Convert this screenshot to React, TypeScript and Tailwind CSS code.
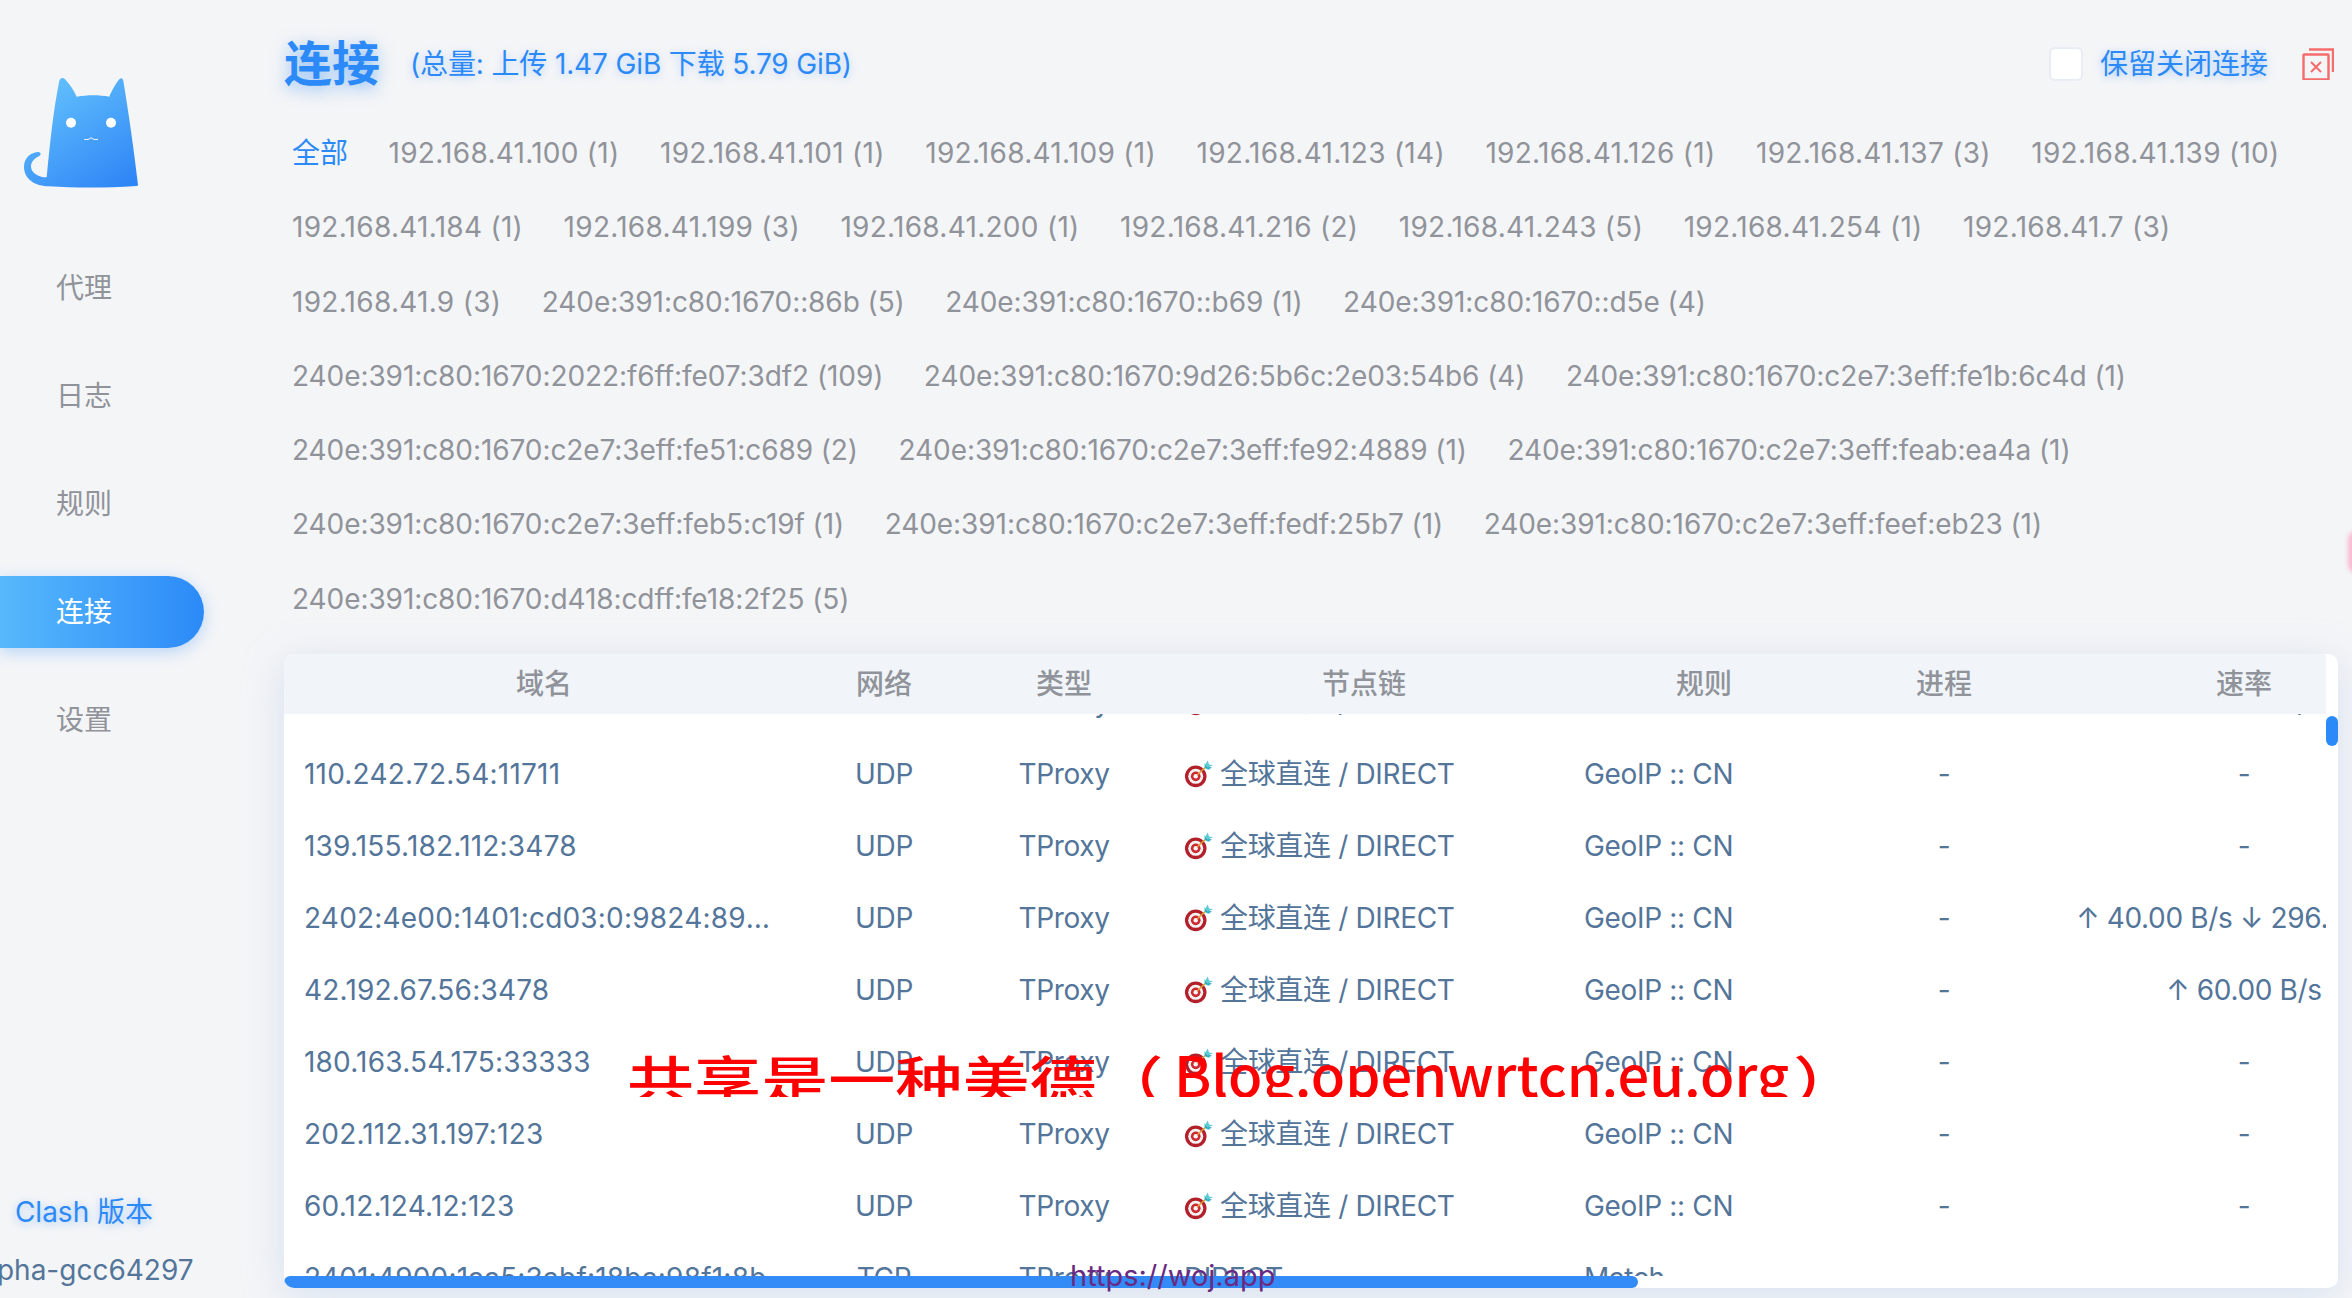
import React from 'react'

const ips = [
  '192.168.41.100 (1)', '192.168.41.101 (1)', '192.168.41.109 (1)', '192.168.41.123 (14)',
  '192.168.41.126 (1)', '192.168.41.137 (3)', '192.168.41.139 (10)', '192.168.41.184 (1)',
  '192.168.41.199 (3)', '192.168.41.200 (1)', '192.168.41.216 (2)', '192.168.41.243 (5)',
  '192.168.41.254 (1)', '192.168.41.7 (3)', '192.168.41.9 (3)', '240e:391:c80:1670::86b (5)',
  '240e:391:c80:1670::b69 (1)', '240e:391:c80:1670::d5e (4)',
  '240e:391:c80:1670:2022:f6ff:fe07:3df2 (109)', '240e:391:c80:1670:9d26:5b6c:2e03:54b6 (4)',
  '240e:391:c80:1670:c2e7:3eff:fe1b:6c4d (1)', '240e:391:c80:1670:c2e7:3eff:fe51:c689 (2)',
  '240e:391:c80:1670:c2e7:3eff:fe92:4889 (1)', '240e:391:c80:1670:c2e7:3eff:feab:ea4a (1)',
  '240e:391:c80:1670:c2e7:3eff:feb5:c19f (1)', '240e:391:c80:1670:c2e7:3eff:fedf:25b7 (1)',
  '240e:391:c80:1670:c2e7:3eff:feef:eb23 (1)', '240e:391:c80:1670:d418:cdff:fe18:2f25 (5)',
]

const rows = [
  { host: '120.232.65.11:443', net: 'UDP', chain: '全球直连 / DIRECT', rule: 'GeoIP :: CN', speed: '↑ 60.00 B/s' },
  { host: '110.242.72.54:11711', net: 'UDP', chain: '全球直连 / DIRECT', rule: 'GeoIP :: CN', speed: '-' },
  { host: '139.155.182.112:3478', net: 'UDP', chain: '全球直连 / DIRECT', rule: 'GeoIP :: CN', speed: '-' },
  { host: '2402:4e00:1401:cd03:0:9824:892...', net: 'UDP', chain: '全球直连 / DIRECT', rule: 'GeoIP :: CN', speed: '↑ 40.00 B/s ↓ 296.00 B/s' },
  { host: '42.192.67.56:3478', net: 'UDP', chain: '全球直连 / DIRECT', rule: 'GeoIP :: CN', speed: '↑ 60.00 B/s' },
  { host: '180.163.54.175:33333', net: 'UDP', chain: '全球直连 / DIRECT', rule: 'GeoIP :: CN', speed: '-' },
  { host: '202.112.31.197:123', net: 'UDP', chain: '全球直连 / DIRECT', rule: 'GeoIP :: CN', speed: '-' },
  { host: '60.12.124.12:123', net: 'UDP', chain: '全球直连 / DIRECT', rule: 'GeoIP :: CN', speed: '-' },
  { host: '2401:4900:1aa5:3abf:18ba:98f1:8b', net: 'TCP', chain: 'DIRECT', rule: 'Match', speed: '-' },
]

function CatLogo() {
  return (
    <svg viewBox="0 0 540 480" className="w-[180px] h-[160px]">
      <defs>
        <linearGradient id="cat" x1="0.25" y1="0.1" x2="0.85" y2="1">
          <stop offset="0" stopColor="#5fbcfc" />
          <stop offset="1" stopColor="#2f86f6" />
        </linearGradient>
      </defs>
      <path
        d="M178 92C182 82 190 82 197 90C210 104 222 122 230 140C262 134 298 134 328 140C336 120 348 100 358 88C364 82 368 84 370 92C386 190 402 300 414 404C414 406 412 408 408 408C320 414 230 414 145 409C100 407 72 384 72 350C72 326 90 308 113 306C122 306 125 313 118 318C102 325 93 336 93 350C94 368 114 382 140 382C150 280 160 180 178 92Z"
        fill="url(#cat)"
      />
      <circle cx="213" cy="218" r="15" fill="#fff" />
      <circle cx="333" cy="218" r="15" fill="#fff" />
      <path d="M253 268C262 270 268 268 273 263C279 268 285 270 294 268" fill="none" stroke="#fff" strokeWidth="3" />
    </svg>
  )
}

function Dart() {
  return (
    <svg viewBox="0 0 32 32" className="w-[30px] h-[30px] shrink-0 mr-[6px]">
      <circle cx="12.5" cy="18.5" r="11.5" fill="#b3202a" />
      <circle cx="12.5" cy="18.5" r="8" fill="#f4f4f4" />
      <circle cx="12.5" cy="18.5" r="5.2" fill="#cf2a33" />
      <circle cx="12.5" cy="18.5" r="2.4" fill="#f4f4f4" />
      <path d="M14 17L25 7" stroke="#e0a030" strokeWidth="1.6" />
      <path d="M22 4L24.5 8L30 9L26 11.5L22 9.5Z" fill="#36b3c4" />
      <path d="M25 1.5L27 6L31 6.5L26 9L23 6Z" fill="#5bcbd6" />
    </svg>
  )
}

function CloseAll() {
  return (
    <svg viewBox="0 0 32 32" className="w-[32px] h-[32px]" fill="none" stroke="#f56c6c" strokeWidth="2.4">
      <rect x="1.5" y="6.5" width="25" height="25" rx="0.5" />
      <path d="M7 1.5H31V24" />
      <path d="M9 14L19 24M19 14L9 24" strokeWidth="2" />
    </svg>
  )
}

export default function App() {
  const nav = ['代理', '日志', '规则', '连接', '设置']

  return (
    <div className="relative w-[2352px] h-[1298px] overflow-hidden flex bg-[#f4f5f7] text-[28px] font-['Inter','Noto_Sans_CJK_SC',sans-serif]">
      {/* Sidebar */}
      <div className="w-[284px] shrink-0 flex flex-col">
        <div className="h-[168px] mt-[50px]">
          <CatLogo />
        </div>
        <div className="flex flex-col mt-[34px]">
          {nav.map((item) => (
            <div
              key={item}
              className={`w-[204px] h-[72px] mb-[36px] flex items-center pl-[56px] rounded-r-full ${
                item === '连接'
                  ? 'text-white bg-gradient-to-r from-[#57b8fb] to-[#2c8af8] shadow-[0_4px_16px_rgba(44,138,248,0.3)]'
                  : 'text-[#909399]'
              }`}
            >
              {item}
            </div>
          ))}
        </div>
        <div className="mt-auto w-[168px] flex flex-col items-center">
          <div className="h-[60px] flex items-center text-[#2c8af8] whitespace-nowrap [text-shadow:0_2px_8px_rgba(44,138,248,0.4)]">
            Clash 版本
          </div>
          <div className="h-[56px] flex items-center justify-center text-[#54759a] whitespace-nowrap">
            alpha-gcc64297
          </div>
        </div>
      </div>

      {/* Main */}
      <div className="w-[2054px] shrink-0 flex flex-col pt-[12px]">
        <div className="h-[104px] flex items-center shrink-0">
          <h1 className="text-[48px] font-bold text-[#2c8af8] [text-shadow:0_4px_16px_rgba(44,138,248,0.5)]">连接</h1>
          <span className="ml-[30px] text-[#2c8af8] tracking-[-0.005em] [text-shadow:0_2px_8px_rgba(44,138,248,0.3)]">
            (总量: 上传 1.47 GiB 下载 5.79 GiB)
          </span>
          <div className="ml-auto flex items-center pr-[4px]">
            <div className="w-[34px] h-[34px] rounded-[6px] bg-white border-2 border-[#e8edf4]" />
            <span className="ml-[17px] text-[#2c8af8] [text-shadow:0_2px_8px_rgba(44,138,248,0.4)]">保留关闭连接</span>
            <div className="ml-[34px]">
              <CloseAll />
            </div>
          </div>
        </div>

        <div className="flex flex-wrap gap-x-[40.5px] pl-[8px] pr-[12px] shrink-0">
          <div className="h-[74.25px] flex items-center text-[#2c8af8]">全部</div>
          {ips.map((ip) => (
            <div
              key={ip}
              className={`h-[74.25px] flex items-center text-[#909399] whitespace-nowrap ${
                ip.startsWith('240e') ? 'tracking-[-0.08px]' : 'tracking-[0.28px]'
              }`}
            >
              {ip}
            </div>
          ))}
        </div>

        {/* Table */}
        <div className="relative mt-[18px] h-[634px] rounded-[10px] bg-white overflow-hidden shadow-[0_8px_40px_rgba(160,190,230,0.35)]">
          <div className="flex h-[60px] w-[2042px] bg-[#f1f5f9] text-[#909399] font-medium relative z-10">
            <div className="w-[520px] flex items-center justify-center">域名</div>
            <div className="w-[160px] flex items-center justify-center">网络</div>
            <div className="w-[200px] flex items-center justify-center">类型</div>
            <div className="w-[400px] flex items-center justify-center">节点链</div>
            <div className="w-[280px] flex items-center justify-center">规则</div>
            <div className="w-[200px] flex items-center justify-center">进程</div>
            <div className="w-[282px] overflow-hidden flex items-center"><span className="w-[400px] shrink-0 text-center">速率</span></div>
          </div>
          <div className="h-[562px] w-[2042px] overflow-hidden text-[#54759a] tracking-[-0.012em]">
            <div className="-mt-[48px]">
              {rows.map((r) => (
                <div key={r.host} className="flex h-[72px] items-center whitespace-nowrap">
                  <div className="w-[520px] pl-[20px] pr-[20px] truncate tracking-[0.2px]">{r.host}</div>
                  <div className="w-[160px] text-center">{r.net}</div>
                  <div className="w-[200px] text-center">TProxy</div>
                  <div className="w-[400px] pl-[20px] flex items-center">
                    {r.net === 'UDP' && <Dart />}
                    {r.chain}
                  </div>
                  <div className="w-[280px] pl-[20px]">{r.rule}</div>
                  <div className="w-[200px] text-center">-</div>
                  <div className="w-[282px] overflow-hidden flex">
                    <span className="w-[400px] shrink-0 text-center">{r.speed}</span>
                  </div>
                </div>
              ))}
            </div>
          </div>
          {/* scrollbars */}
          <div className="absolute right-0 top-[62px] w-[12px] h-[30px] rounded-full bg-[#2c8af8]" />
          <div className="absolute left-0 bottom-0 w-[1354px] h-[12px] rounded-full bg-[#338bf7]" />
        </div>
      </div>

      {/* Overlays burnt into the screenshot */}
      <div className="absolute left-[627px] top-[1052px] h-[45px] flex overflow-hidden text-[#ff0000] font-medium whitespace-nowrap font-['Noto_Sans_CJK_SC',sans-serif]">
        <span className="w-[536px] shrink-0 origin-top-left scale-x-[1.29] text-[52px] leading-[52px]">共享是一种美德（</span>
        <span className="ml-[11px] -mt-[7px] text-[56px] leading-[56px]">Blog.openwrtcn.eu.org</span>
        <span className="w-[40px] shrink-0 ml-[4px] origin-top-left scale-x-[1.29] text-[52px] leading-[52px]">）</span>
      </div>
      <div className="absolute left-[1070px] top-[1258px] text-[29px] leading-[36px] text-[#6a2a82] whitespace-nowrap">
        https://woj.app
      </div>
      <div className="absolute left-[2348px] top-[530px] w-[20px] h-[44px] rounded-full bg-[#f9b8d0] blur-[2px]" />
    </div>
  )
}
